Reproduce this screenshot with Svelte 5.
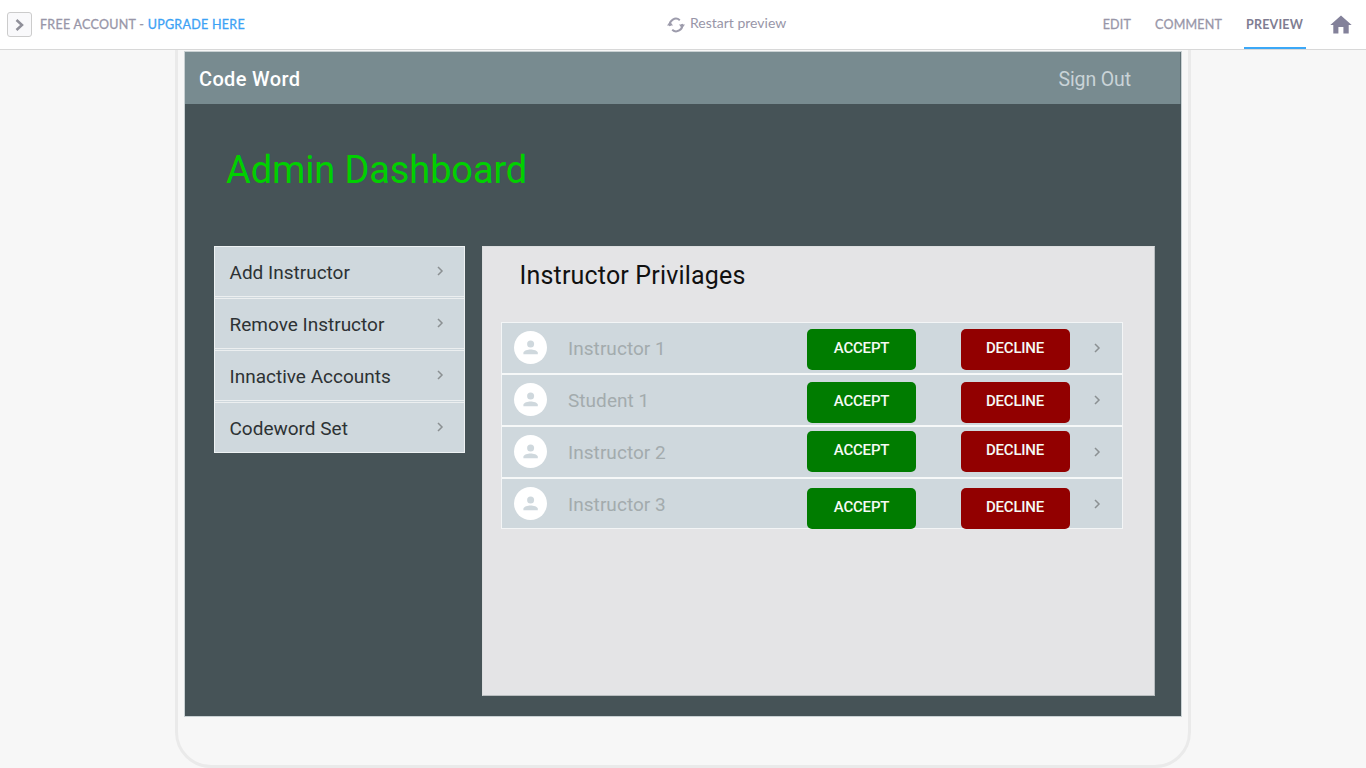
<script>
  const menu = ['Add Instructor', 'Remove Instructor', 'Innactive Accounts', 'Codeword Set'];
  const people = [
    { name: 'Instructor 1', shift: 6 },
    { name: 'Student 1', shift: 7 },
    { name: 'Instructor 2', shift: 4 },
    { name: 'Instructor 3', shift: 9 }
  ];
</script>

{#snippet chevron()}
  <svg class="chev" width="8" height="10" viewBox="0 0 8 10"><path d="M2 1 L6 5 L2 9" fill="none" stroke="#8b9092" stroke-width="1.5" /></svg>
{/snippet}

<div class="page">
  <header class="top">
    <div class="account">
      <button class="toggle" aria-label="Expand">
        <svg width="10" height="12" viewBox="0 0 10 12"><path d="M1.5 1 L7 6 L1.5 11" fill="none" stroke="#8f8f99" stroke-width="2.5" /></svg>
      </button>
      <span class="free">FREE ACCOUNT - <b>UPGRADE HERE</b></span>
    </div>
    <div class="restart">
      <svg width="18" height="16" viewBox="0 0 18 16">
        <g fill="none" stroke="#9d9cac" stroke-width="2">
          <path d="M3 9 A6 6 0 0 1 12.8 3.2" />
          <path d="M15 7 A6 6 0 0 1 5.2 12.8" />
        </g>
        <path d="M0 8.5 L3 4.5 L6 8.5 Z M12 7.5 H18 L15 11.5 Z" fill="#9d9cac" />
      </svg>
      <span>Restart preview</span>
    </div>
    <nav>
      <span class="edit">EDIT</span>
      <span class="comment">COMMENT</span>
      <span class="preview">PREVIEW</span>
      <svg width="22" height="19" viewBox="0 0 22 19"><path d="M11 0.5 L21.7 10 H18.7 V18.5 H13.4 V12 H8.4 V18.5 H3.3 V10 H0.3 Z" fill="#83819a" /></svg>
    </nav>
  </header>

  <div class="device">
    <div class="screen">
      <div class="appbar">
        <span class="brand">Code Word</span>
        <span class="signout">Sign Out</span>
      </div>
      <h1><span>Admin Dashboard</span></h1>
      <div class="columns">
        <div class="menu">
          {#each menu as item}
            <div class="item"><span>{item}</span>{@render chevron()}</div>
          {/each}
        </div>
        <section>
          <h2><span>Instructor Privilages</span></h2>
          <div class="list">
            {#each people as p}
              <div class="row">
                <svg class="avatar" width="33" height="33" viewBox="0 0 33 33">
                  <circle cx="16.5" cy="16.5" r="16.5" fill="#fff" />
                  <circle cx="16.6" cy="13" r="3.5" fill="#cfd8dd" />
                  <path d="M9.4 23.3 V21.8 C9.4 19.5 14 18.4 16.6 18.4 S23.8 19.5 23.8 21.8 V23.3 Z" fill="#cfd8dd" />
                </svg>
                <span class="name">{p.name}</span>
                <button class="accept" style="margin-top: {p.shift}px"><span>ACCEPT</span></button>
                <button class="decline" style="margin-top: {p.shift}px"><span>DECLINE</span></button>
                {@render chevron()}
              </div>
            {/each}
          </div>
        </section>
      </div>
    </div>
  </div>
</div>

<style>
  :global(body) { background: #f7f7f7; overflow: hidden; }
  .page { width: 1366px; height: 768px; overflow: hidden; display: flex; flex-direction: column; align-items: center; font-family: Roboto, sans-serif; background: #f7f7f7; }
  .page * { box-sizing: border-box; }
  span { white-space: nowrap; }
  svg { display: block; flex: none; }
  .top { width: 1366px; height: 50px; flex: none; z-index: 1; background: #fff; border-bottom: 1px solid #d8d8d8; display: grid; grid-template-columns: 667px 1fr auto; font-family: Lato, sans-serif; color: #9896a8; }
  .account { display: flex; align-items: center; padding-left: 7px; gap: 8px; }
  .toggle { width: 25px; height: 25px; padding: 0 0 0 1px; background: #f9f9fb; border: 1px solid #ccc; border-radius: 3px; display: flex; align-items: center; justify-content: center; }
  .free { font-size: 12.5px; letter-spacing: .28px; font-weight: 400; -webkit-text-stroke: .3px currentColor; }
  .free b { color: #3ca2f5; font-weight: 400; }
  .restart { display: flex; align-items: center; gap: 5px; font-size: 14px; }
  .restart svg { margin-top: 1px; }
  .restart span { margin-top: -4px; }
  nav { display: flex; height: 49px; align-items: center; padding-right: 14px; font-size: 12.5px; letter-spacing: .2px; }
  .edit, .comment { -webkit-text-stroke: .3px currentColor; }
  .edit { margin-right: 24px; }
  .comment { margin-right: 22px; }
  .preview { height: 49px; width: 62px; line-height: 49px; padding-left: 2px; margin-right: 24px; color: #7f7d92; font-weight: 700; border-bottom: 2px solid #3ca8f7; }
  .device { width: 1016px; height: 760px; margin-top: -42px; flex: none; border: 3px solid #eaeaea; border-radius: 36px; padding: 41px 7px 0; }
  .screen { width: 996px; height: 664px; background: #465357; box-shadow: 0 0 0 1px #c9d1d3; display: flex; flex-direction: column; }
  .appbar { height: 52px; background: #788b90; display: flex; align-items: center; justify-content: space-between; padding: 2px 50px 0 14px; border-right: 1px solid #5f7075; }
  .brand { font-size: 20px; font-weight: 500; letter-spacing: .35px; color: #fff; }
  .signout { font-size: 19.5px; letter-spacing: -.12px; margin: 0 -1px 0 0; color: #c9d3d7; }
  h1 { margin: 0; height: 142px; padding: 44px 0 0 41px; font-size: 38px; line-height: 45px; font-weight: 400; letter-spacing: -.12px; color: #00d000; }
  .columns { display: flex; gap: 17px; padding-left: 29px; align-items: flex-start; }
  .menu { width: 251px; height: 207px; border: 1px solid #eef2f3; background: #cfd8dd; }
  .item { height: 52px; border-bottom: 3px double #eceff0; display: flex; align-items: center; justify-content: space-between; padding: 1px 20px 0 14.5px; font-size: 19px; color: #2d3234; }
  .item:last-child { height: 49px; border-bottom: 0; }
  .item .chev { margin-top: -2px; }
  section { width: 673px; height: 450px; background: #e4e4e6; border: 1px solid #b8bdbf; border-left-color: #dcdedf; border-top-color: #dcdedf; padding-left: 18px; }
  h2 { margin: 0; height: 75px; padding: 14px 0 0 18.5px; font-size: 25px; line-height: 30px; font-weight: 400; letter-spacing: .18px; color: #111; }
  .list { width: 622px; height: 207px; border: 1px solid #f3f5f6; background: #cfd8dd; }
  .row { height: 52px; display: flex; align-items: flex-start; padding-left: 12px; border-bottom: 2px solid #f6f8f8; }
  .row:last-child { height: 49px; border-bottom: 0; }
  .avatar { margin-top: 8px; }
  .name { width: 239px; margin: 14px 0 0 21px; font-size: 19px; line-height: 24px; letter-spacing: .05px; color: #a3abad; }
  button { border: 0; }
  .accept, .decline { width: 109px; height: 41px; flex: none; border-radius: 5px; padding: 0 0 3px; background: #007c00; color: #f5faf5; font: 500 15px Roboto, sans-serif; letter-spacing: -.2px; }
  .decline { background: #920000; margin-left: 45px; padding-right: 1px; }
  .row .chev { margin: 20px 0 0 23px; }
</style>
